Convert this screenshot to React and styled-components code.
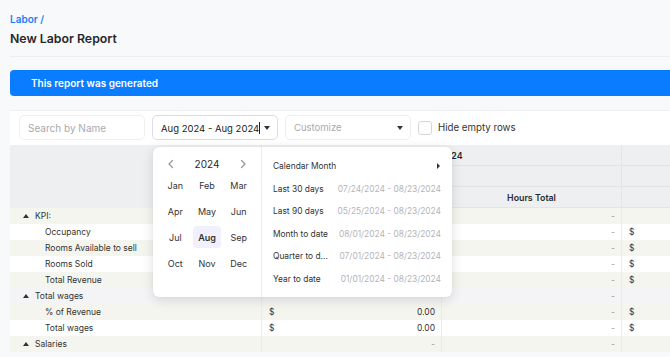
import styled, {createGlobalStyle} from 'styled-components';

const GlobalStyle = createGlobalStyle`
  html, body {
    margin: 0;
    padding: 0;
    background: #f8f9fb;
    overflow: hidden;
    font-family: Inter, "Liberation Sans", sans-serif;
    color: #2b2b2e;
  }
`;

const months = ['Jan', 'Feb', 'Mar', 'Apr', 'May', 'Jun', 'Jul', 'Aug', 'Sep', 'Oct', 'Nov', 'Dec'];

const presets = [
  {label: 'Last 30 days', range: '07/24/2024 - 08/23/2024'},
  {label: 'Last 90 days', range: '05/25/2024 - 08/23/2024'},
  {label: 'Month to date', range: '08/01/2024 - 08/23/2024'},
  {label: 'Quarter to d...', range: '07/01/2024 - 08/23/2024'},
  {label: 'Year to date', range: '01/01/2024 - 08/23/2024'},
];

const rows = [
  {label: 'KPI:', group: true, amount: null, hours: '-', tone: 'beige'},
  {label: 'Occupancy', hours: '-', dollar: true, tone: 'white'},
  {label: 'Rooms Available to sell', hours: '-', dollar: true, tone: 'beige'},
  {label: 'Rooms Sold', hours: '-', dollar: true, tone: 'white'},
  {label: 'Total Revenue', hours: '-', dollar: true, tone: 'beige'},
  {label: 'Total wages', group: true, hours: '-', tone: 'grey'},
  {label: '% of Revenue', amount: '0.00', hours: '-', dollar: true, tone: 'beige'},
  {label: 'Total wages', amount: '0.00', hours: '-', dollar: true, tone: 'white'},
  {label: 'Salaries', group: true, amount: '-', hours: '-', tone: 'beige'},
];

const tones = {beige: '#f5f5ef', white: '#ffffff', grey: '#f4f4f6'};

export default function App() {
  return (
    <>
      <GlobalStyle />
      <Page>
        <Breadcrumb>Labor /</Breadcrumb>
        <Title>New Labor Report</Title>
        <Divider />
        <Banner>This report was generated</Banner>
        <Panel>
          <Toolbar>
            <SearchInput placeholder="Search by Name" />
            <DateWrap>
              <SelectBox $active>
                <span>
                  Aug 2024 - Aug 2024<Caret />
                </span>
                <Arrow />
              </SelectBox>
              <Popup>
                <MonthPane>
                  <YearNav>
                    <NavBtn>
                      <svg width="10" height="10" viewBox="0 0 10 10">
                        <path d="M6.5 1.5 3 5l3.5 3.5" fill="none" stroke="#9a9aa0" strokeWidth="1.4" strokeLinecap="round" strokeLinejoin="round" />
                      </svg>
                    </NavBtn>
                    <Year>2024</Year>
                    <NavBtn>
                      <svg width="10" height="10" viewBox="0 0 10 10">
                        <path d="M3.5 1.5 7 5 3.5 8.5" fill="none" stroke="#9a9aa0" strokeWidth="1.4" strokeLinecap="round" strokeLinejoin="round" />
                      </svg>
                    </NavBtn>
                  </YearNav>
                  <MonthGrid>
                    {months.map(m => (
                      <Month key={m} $selected={m === 'Aug'}>
                        {m}
                      </Month>
                    ))}
                  </MonthGrid>
                </MonthPane>
                <PresetPane>
                  <Preset>
                    <span>Calendar Month</span>
                    <SubArrow />
                  </Preset>
                  {presets.map(p => (
                    <Preset key={p.label}>
                      <span>{p.label}</span>
                      <Range>{p.range}</Range>
                    </Preset>
                  ))}
                </PresetPane>
              </Popup>
            </DateWrap>
            <SelectBox>
              <Placeholder>Customize</Placeholder>
              <Arrow />
            </SelectBox>
            <CheckLabel>
              <Check />
              Hide empty rows
            </CheckLabel>
          </Toolbar>
          <Table>
            <HeadGrid>
              <HeadCorner />
              <HeadCell $span={2} $bold>
                Aug 2024
              </HeadCell>
              <HeadCell />
              <HeadCell />
              <HeadCell />
              <HeadCell />
              <HeadCell />
              <HeadCell $bold>Hours Total</HeadCell>
              <HeadCell />
            </HeadGrid>
            {rows.map((r, i) => (
              <Row key={i} $bg={tones[r.tone]}>
                <LabelCell $group={r.group}>
                  {r.group && <Tri />}
                  {r.label}
                </LabelCell>
                <NumCell>
                  {r.amount === '0.00' && <Dollar>$</Dollar>}
                  <Value $muted={r.amount === '-'}>{r.amount}</Value>
                </NumCell>
                <NumCell>
                  <Value $muted>{r.hours}</Value>
                </NumCell>
                <NumCell>{r.dollar && <Dollar>$</Dollar>}</NumCell>
              </Row>
            ))}
          </Table>
        </Panel>
      </Page>
    </>
  );
}

const Page = styled.div`
  width: 760px;
  padding: 12px 0 0 10px;
`;

const Breadcrumb = styled.div`
  font-size: 10px;
  font-weight: 600;
  color: #1b7ef6;
  line-height: 14px;
`;

const Title = styled.h1`
  margin: 4px 0 0;
  font-size: 12.3px;
  font-weight: 600;
  line-height: 18px;
  color: #28282b;
`;

const Divider = styled.div`
  height: 1px;
  background: #eceef1;
  margin-top: 8px;
`;

const Banner = styled.div`
  margin-top: 13px;
  height: 26px;
  border-radius: 4px;
  background: #0a7cff;
  color: #fff;
  font-size: 10px;
  font-weight: 600;
  line-height: 26px;
  padding-left: 21px;
`;

const Panel = styled.div`
  margin-top: 14px;
  border-top: 1px solid #eef0f2;
  background: #fff;
`;

const Toolbar = styled.div`
  display: flex;
  align-items: center;
  gap: 7px;
  padding: 4px 9px 5px;
`;

const SearchInput = styled.input`
  box-sizing: border-box;
  width: 126px;
  height: 25px;
  border: 1px solid #efeff2;
  border-radius: 5px;
  padding: 0 8px;
  font-family: inherit;
  font-size: 10px;
  outline: none;
  &::placeholder {
    color: #a9a9ae;
  }
`;

const DateWrap = styled.div`
  position: relative;
`;

const SelectBox = styled.div`
  box-sizing: border-box;
  width: 126px;
  height: 25px;
  border: 1px solid ${p => (p.$active ? '#dcdaf6' : '#efeff2')};
  border-radius: 5px;
  padding: 0 7px 0 8px;
  display: flex;
  align-items: center;
  justify-content: space-between;
  font-size: 9.5px;
  color: #222;
  white-space: nowrap;
`;

const Caret = styled.i`
  display: inline-block;
  width: 1px;
  height: 12px;
  background: #222;
  vertical-align: -2px;
`;

const Arrow = styled.i`
  width: 0;
  height: 0;
  border-left: 3.5px solid transparent;
  border-right: 3.5px solid transparent;
  border-top: 4px solid #333;
`;

const Placeholder = styled.span`
  color: #a9a9ae;
`;

const CheckLabel = styled.label`
  display: flex;
  align-items: center;
  gap: 6px;
  font-size: 9.7px;
  color: #333;
`;

const Check = styled.span`
  box-sizing: border-box;
  width: 14px;
  height: 14px;
  border: 1px solid #d6d6da;
  border-radius: 3px;
  background: #fff;
`;

const Popup = styled.div`
  position: absolute;
  top: 32px;
  left: 1px;
  z-index: 5;
  width: 299px;
  height: 150px;
  display: flex;
  background: #fff;
  border-radius: 6px;
  box-shadow: 0 3px 12px rgba(0, 0, 0, 0.13), 0 0 1px rgba(0, 0, 0, 0.1);
`;

const MonthPane = styled.div`
  width: 109px;
  border-right: 1px solid #ececef;
  padding: 9px 8px 0;
  box-sizing: border-box;
`;

const YearNav = styled.div`
  display: flex;
  align-items: center;
  justify-content: space-between;
  padding: 0 5px;
  height: 16px;
`;

const NavBtn = styled.span`
  display: flex;
`;

const Year = styled.span`
  font-size: 10px;
  color: #2a2a2d;
`;

const MonthGrid = styled.div`
  display: grid;
  grid-template-columns: repeat(3, 1fr);
  grid-auto-rows: 26px;
  column-gap: 3px;
`;

const Month = styled.div`
  display: flex;
  align-items: center;
  justify-content: center;
  font-size: 9px;
  color: #333;
  border-radius: 4px;
  margin: 2px 0;
  font-weight: ${p => (p.$selected ? 600 : 400)};
  background: ${p => (p.$selected ? '#f1f0fe' : 'transparent')};
`;

const PresetPane = styled.div`
  flex: 1;
  padding: 8px 11px 0 11px;
`;

const Preset = styled.div`
  display: flex;
  align-items: center;
  justify-content: space-between;
  height: 22.5px;
  font-size: 8.4px;
  color: #333;
  white-space: nowrap;
`;

const Range = styled.span`
  color: #b4b4b8;
`;

const SubArrow = styled.i`
  width: 0;
  height: 0;
  border-top: 3px solid transparent;
  border-bottom: 3px solid transparent;
  border-left: 3.5px solid #333;
  margin-right: 1px;
`;

const Table = styled.div`
  font-size: 8.5px;
  color: #333;
`;

const cols = '252px 180px 180px 180px';

const HeadGrid = styled.div`
  display: grid;
  grid-template-columns: ${cols};
  grid-template-rows: 21px 21px 21px;
  background: #eeeff1;
`;

const HeadCorner = styled.div`
  grid-row: span 3;
  border-right: 1px solid #e3e4e7;
`;

const HeadCell = styled.div`
  grid-column: span ${p => p.$span || 1};
  display: flex;
  align-items: center;
  justify-content: center;
  border-right: 1px solid #e3e4e7;
  border-bottom: 1px solid #e3e4e7;
  font-weight: ${p => (p.$bold ? 600 : 400)};
  font-size: 8.8px;
  color: #2a2a2d;
`;

const Row = styled.div`
  display: grid;
  grid-template-columns: ${cols};
  height: 16px;
  background: ${p => p.$bg};
`;

const LabelCell = styled.div`
  display: flex;
  align-items: center;
  padding-left: ${p => (p.$group ? '13px' : '35px')};
  gap: 6px;
  border-right: 1px solid #ebebed;
`;

const Tri = styled.i`
  width: 0;
  height: 0;
  border-left: 3px solid transparent;
  border-right: 3px solid transparent;
  border-bottom: 4px solid #333;
`;

const NumCell = styled.div`
  display: flex;
  align-items: center;
  padding: 0 6px 0 7px;
  border-right: 1px solid #ebebed;
`;

const Dollar = styled.span``;

const Value = styled.span`
  margin-left: auto;
  color: ${p => (p.$muted ? '#9a9aa0' : '#333')};
`;
